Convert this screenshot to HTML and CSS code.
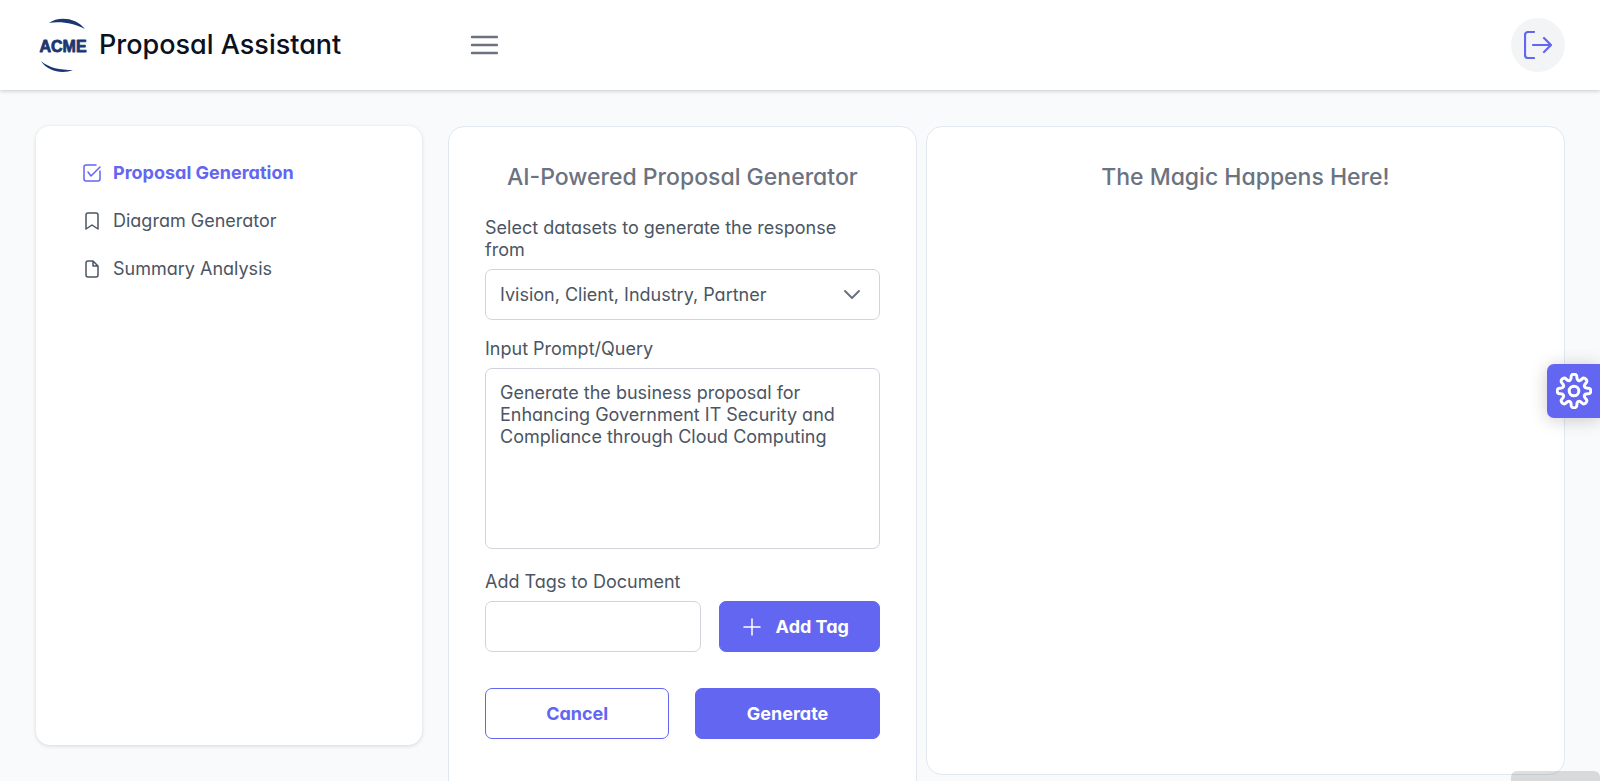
FILE: index.html
```
<!DOCTYPE html>
<html lang="en">
<head>
  <meta charset="UTF-8" />
  <meta name="viewport" content="width=device-width, initial-scale=1.0"/>
  <title>Proposal Assistant</title>
  <link rel="stylesheet" href="styles.css">
</head>
<body>
  <header class="topbar">
    <a href="#" class="brand">
      <svg class="brand-logo" viewBox="0 0 50 54" aria-hidden="true">
        <path d="M11 5 C20 -2 38 -1 47 11 C37 6 24 3 11 5Z" fill="#1b3670"/>
        <path d="M3 43 C11 50 22 52 35 52 C25 56 10 54 3 43Z" fill="#1b3670"/>
        <text x="25" y="34" text-anchor="middle" class="logo-text">ACME</text>
      </svg>
      <span>Proposal Assistant</span>
    </a>
    <button class="menu-button" aria-label="Toggle menu">
      <svg viewBox="0 0 28 28"><path d="M2 6h25M2 14h25M2 22h25"/></svg>
    </button>
    <button class="logout-button" aria-label="Log out">
      <svg viewBox="0 0 28 28"><path d="M10 1H4a3 3 0 0 0-3 3v20a3 3 0 0 0 3 3h6M9 14h18M20 7l7 7-7 7"/></svg>
    </button>
  </header>

  <div class="layout">
    <nav class="sidebar">
      <a href="#" class="active">
        <svg viewBox="0 0 18 18"><path d="M13 1H3a2 2 0 0 0-2 2v12a2 2 0 0 0 2 2h12a2 2 0 0 0 2-2V7M5 8l3 4 9-9"/></svg>
        Proposal Generation
      </a>
      <a href="#">
        <svg viewBox="0 0 18 18"><path d="M3 17V3a2 2 0 0 1 2-2h8a2 2 0 0 1 2 2v14l-6-4z"/></svg>
        Diagram Generator
      </a>
      <a href="#">
        <svg viewBox="0 0 18 18"><path d="M10 1H5a2 2 0 0 0-2 2v12a2 2 0 0 0 2 2h8a2 2 0 0 0 2-2V6zM10 1v5h5"/></svg>
        Summary Analysis
      </a>
    </nav>

    <main class="content">
      <section class="card form-card">
        <h2>AI-Powered Proposal Generator</h2>
        <form>
          <div class="field">
            <label for="datasets">Select datasets to generate the response from</label>
            <div class="select-wrap">
              <select id="datasets">
                <option>Ivision, Client, Industry, Partner</option>
              </select>
              <svg class="chevron" viewBox="0 0 18 18"><path d="M2 5l7 7 7-7"/></svg>
            </div>
          </div>
          <div class="field prompt-field">
            <label for="prompt">Input Prompt/Query</label>
            <textarea id="prompt">Generate the business proposal for Enhancing Government IT Security and Compliance through Cloud Computing</textarea>
          </div>
          <div class="field">
            <label for="tags">Add Tags to Document</label>
            <div class="tag-row">
              <input type="text" id="tags">
              <button type="button" class="btn tag-button">
                <svg viewBox="0 0 18 18"><path d="M9 1v16M1 9h16"/></svg>
                <span>Add Tag</span>
              </button>
            </div>
          </div>
          <div class="actions">
            <button type="button" class="btn btn-outline">Cancel</button>
            <button type="button" class="btn">Generate</button>
          </div>
        </form>
      </section>

      <section class="card result-card">
        <h2>The Magic Happens Here!</h2>
      </section>
    </main>
  </div>

  <button class="settings-button" aria-label="Settings">
    <svg viewBox="-18 -18 36 36">
      <path id="gear" d=""/>
      <circle r="4.8"/>
    </svg>
  </button>
  <div class="status-bar"></div>

  <script>
    // Gear outline: eight rounded teeth, smoothed through the midpoints
    const points = [];
    for (let i = 0; i < 8; i++) {
      [[-10, 17], [10, 17], [14, 11.5], [31, 11.5]].forEach(([deg, r]) => {
        const a = (i * 45 + deg - 90) * Math.PI / 180;
        points.push([r * Math.cos(a), r * Math.sin(a)]);
      });
    }
    const mid = (p, q) => `${(p[0] + q[0]) / 2} ${(p[1] + q[1]) / 2}`;
    let d = "M" + mid(points[points.length - 1], points[0]);
    points.forEach((p, i) => {
      d += `Q${p[0]} ${p[1]} ${mid(p, points[(i + 1) % points.length])}`;
    });
    document.getElementById("gear").setAttribute("d", d + "Z");
  </script>
</body>
</html>
```
FILE: styles.css
```
* {
  box-sizing: border-box;
}

body {
  margin: 0;
  height: 100vh;
  overflow: hidden;
  background-color: #f8fafc;
  color: #4b5563;
  font-family: "Inter", sans-serif;
  font-feature-settings: "cv11";
  font-size: 18px;
  line-height: 22px;
}

button, input, select, textarea {
  font: inherit;
  font-feature-settings: inherit;
  color: inherit;
}

button {
  cursor: pointer;
}

svg {
  fill: none;
  stroke: currentColor;
  stroke-width: 1.5;
  stroke-linecap: round;
  stroke-linejoin: round;
}

.topbar {
  display: flex;
  align-items: center;
  height: 90px;
  padding: 0 35px 0 36px;
  background: #fff;
  box-shadow: 0 1px 4px rgba(0, 0, 0, 0.2);
}

.brand {
  display: flex;
  align-items: center;
  gap: 11px;
  width: 422px;
  padding-left: 2px;
  color: #0b1120;
  font-size: 27px;
  font-weight: 500;
  line-height: 36px;
  text-decoration: none;
}

.brand-logo {
  width: 50px;
  height: 54px;
  stroke: none;
}

.logo-text {
  font-family: "Liberation Sans", sans-serif;
  font-size: 16px;
  font-weight: bold;
  fill: #1b3670;
  stroke: #1b3670;
  stroke-width: 0.8;
}

.menu-button {
  display: flex;
  padding: 12px;
  border: 0;
  background: none;
  color: #6b7280;
}

.menu-button svg {
  width: 28px;
  height: 28px;
  stroke-width: 2.5;
}

.logout-button {
  display: flex;
  align-items: center;
  justify-content: center;
  width: 54px;
  height: 54px;
  margin-left: auto;
  border: 0;
  border-radius: 50%;
  background: #f3f4f6;
  color: #6366f1;
}

.logout-button svg {
  width: 28px;
  height: 28px;
  stroke-width: 2.2;
}

.layout {
  display: flex;
  align-items: flex-start;
  gap: 26px;
  padding: 36px 35px 0 36px;
}

.sidebar {
  flex: 0 0 386px;
  height: calc(100vh - 162px);
  padding: 23px 45px;
  border-radius: 14px;
  background: #fff;
  box-shadow: 0 1px 4px rgba(0, 0, 0, 0.14);
}

.sidebar a {
  display: flex;
  align-items: center;
  gap: 12px;
  padding: 13px 2px;
  color: #4b5563;
  text-decoration: none;
}

.sidebar svg {
  width: 18px;
  height: 18px;
}

.sidebar .active {
  color: #6366f1;
  font-weight: 700;
}

.content {
  flex: 1;
  display: grid;
  grid-template-columns: 11fr 15fr;
  align-items: start;
  gap: 9px;
}

.card {
  padding: 36px;
  border: 1px solid #e2e8f0;
  border-radius: 16px;
  background: #fff;
}

.form-card {
  min-height: calc(100vh - 90px);
}

.result-card {
  height: calc(100vh - 132px);
}

.card h2 {
  margin: 0 0 26px;
  color: #6b7280;
  font-size: 23px;
  font-weight: 450;
  line-height: 28px;
  text-align: center;
}

.field {
  display: flex;
  flex-direction: column;
  gap: 8px;
  margin-bottom: 18px;
}

.prompt-field {
  margin-bottom: 22px;
}

.select-wrap {
  position: relative;
}

select, textarea, input {
  width: 100%;
  border: 1px solid #d1d5db;
  border-radius: 7px;
  background: #fff;
  outline: none;
}

select, input {
  height: 51px;
  padding: 0 14px;
}

select {
  display: block;
  appearance: none;
}

.chevron {
  position: absolute;
  top: 17px;
  right: 19px;
  width: 18px;
  height: 18px;
  color: #6b7280;
  stroke-width: 2;
  pointer-events: none;
}

textarea {
  height: 181px;
  padding: 13px 14px;
  resize: none;
}

.tag-row {
  display: flex;
  gap: 18px;
}

.tag-row input {
  flex: 1;
  min-width: 0;
}

.btn {
  height: 51px;
  border: 1px solid #6366f1;
  border-radius: 7px;
  background: #6366f1;
  color: #fff;
  font-weight: 700;
}

.tag-button {
  display: flex;
  align-items: center;
  width: 161px;
  padding: 0 23px;
}

.tag-button svg {
  width: 18px;
  height: 18px;
}

.tag-button span {
  flex: 1;
  padding-left: 8px;
}

.actions {
  display: grid;
  grid-template-columns: 1fr 1fr;
  gap: 26px;
  padding-top: 18px;
}

.btn-outline {
  background: #fff;
  color: #6366f1;
}

/* Pinned to the right edge of the window */
.settings-button {
  position: fixed;
  top: calc(50% - 27px);
  right: 0;
  display: flex;
  align-items: center;
  justify-content: center;
  width: 53px;
  height: 54px;
  padding: 0;
  border: 0;
  border-radius: 7px 0 0 7px;
  background: #6366f1;
  color: #fff;
  box-shadow: 0 2px 18px rgba(0, 0, 0, 0.2);
}

.settings-button svg {
  width: 36px;
  height: 36px;
  stroke-width: 3;
}

.status-bar {
  position: fixed;
  right: 0;
  bottom: 0;
  width: 89px;
  height: 10px;
  border-radius: 6px 6px 0 0;
  background: rgba(0, 0, 0, 0.13);
}
```
